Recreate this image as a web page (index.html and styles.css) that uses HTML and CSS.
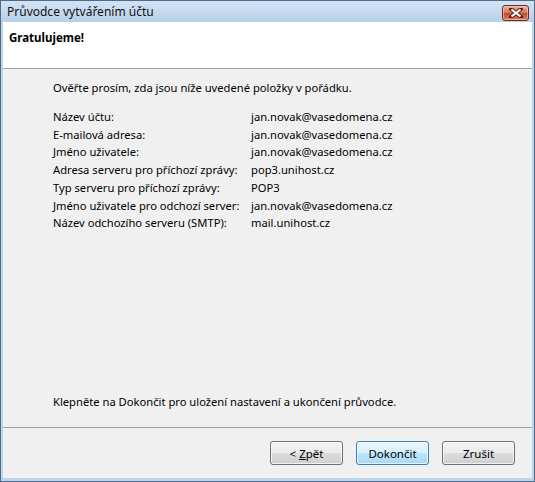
FILE: index.html
```html
<!DOCTYPE html>
<html lang="cs">
<head>
    <meta charset="UTF-8">
    <title>Průvodce vytvářením účtu</title>
    <link rel="stylesheet" href="styles.css">
</head>
<body>
    <div class="window">
        <div class="titlebar">
            <span class="title">Průvodce vytvářením účtu</span>
            <span class="close">
                <svg width="14" height="10" viewBox="0 0 14 10">
                    <path d="M2 1 L12 9 M12 1 L2 9" stroke="#5a2418" stroke-width="4" stroke-linecap="square"/>
                    <path d="M2.5 1.5 L11.5 8.5 M11.5 1.5 L2.5 8.5" stroke="#ffffff" stroke-width="2.2"/>
                </svg>
            </span>
        </div>

        <div class="client">
            <div class="header">
                <h1>Gratulujeme!</h1>
            </div>

            <div class="content">
                <p class="intro">Ověřte prosím, zda jsou níže uvedené položky v pořádku.</p>

                <!-- Summary of the new account -->
                <div class="summary">
                    <span>Název účtu:</span>
                    <span>jan.novak@vasedomena.cz</span>
                    <span>E-mailová adresa:</span>
                    <span>jan.novak@vasedomena.cz</span>
                    <span>Jméno uživatele:</span>
                    <span>jan.novak@vasedomena.cz</span>
                    <span>Adresa serveru pro příchozí zprávy:</span>
                    <span>pop3.unihost.cz</span>
                    <span>Typ serveru pro příchozí zprávy:</span>
                    <span>POP3</span>
                    <span>Jméno uživatele pro odchozí server:</span>
                    <span>jan.novak@vasedomena.cz</span>
                    <span>Název odchozího serveru (SMTP):</span>
                    <span>mail.unihost.cz</span>
                </div>

                <p class="hint">Klepněte na Dokončit pro uložení nastavení a ukončení průvodce.</p>
            </div>

            <div class="footer">
                <button type="button" class="btn">&lt; <u>Z</u>pět</button>
                <button type="button" class="btn btn-default">Dokončit</button>
                <button type="button" class="btn btn-cancel">Zrušit</button>
            </div>
        </div>
    </div>
</body>
</html>
```

FILE: styles.css
```css
body {
    margin: 0;
    font-family: "Noto Sans", "Open Sans", sans-serif;
    font-size: 11.2px;
    color: #000;
    background: #ffffff;
}

.window {
    width: 535px;
    height: 482px;
    box-sizing: border-box;
    border: 1px solid #4f6b8b;
    background: #bcd4ec;
    padding: 0 2px 3px;
    display: flex;
    flex-direction: column;
}

.titlebar {
    height: 21px;
    margin: 0 -2px;
    padding: 0 5px 0 6px;
    display: flex;
    align-items: center;
    justify-content: space-between;
    background: linear-gradient(#d3e3f4, #b7cfea);
}

.title {
    color: #111;
    line-height: 21px;
    font-size: 12px;
}

.close {
    width: 25px;
    height: 14px;
    margin-top: 2px;
    border: 1px solid #6e2b1f;
    border-radius: 3px;
    display: flex;
    align-items: center;
    justify-content: center;
    background: linear-gradient(#eab5a4, #d47a62 45%, #c24a2e 55%, #d9806a);
    box-shadow: inset 0 0 0 1px rgba(255, 220, 210, 0.5);
}

.client {
    flex: 1;
    display: flex;
    flex-direction: column;
    background: #f0f0f0;
}

.header {
    height: 46px;
    background: #ffffff;
    border-bottom: 1px solid #a0a0a0;
    padding: 0 6px;
}

.header h1 {
    margin: 0;
    font-size: 11.5px;
    font-weight: bold;
    line-height: 18px;
    padding-top: 7px;
}

.content {
    height: 359px;
    box-sizing: border-box;
    padding: 10px 0 16px 50px;
    display: flex;
    flex-direction: column;
    border-bottom: 1px solid #a0a0a0;
}

.content p {
    margin: 0;
    line-height: 18px;
    white-space: nowrap;
}

.summary {
    margin-top: 11px;
    display: grid;
    grid-template-columns: 198px auto;
    line-height: 17.7px;
    white-space: nowrap;
}

.hint {
    margin-top: auto !important;
}

.footer {
    flex: 1;
    display: flex;
    justify-content: flex-end;
    align-items: flex-start;
    gap: 13px;
    padding: 13px 17px 0 0;
}

.btn {
    width: 73px;
    height: 24px;
    padding: 0;
    font-family: inherit;
    font-size: 11.5px;
    color: #000;
    border: 1px solid #707070;
    border-radius: 3px;
    background: linear-gradient(#f2f2f2, #ebebeb 50%, #dddddd 50%, #cfcfcf);
    box-shadow: inset 0 0 0 1px rgba(255, 255, 255, 0.7);
}

    .btn-default {
        border-color: #3c7fb1;
        background: linear-gradient(#eaf6fd, #d9f0fc 50%, #bee6fd 50%, #a7d9f5);
    }
```
